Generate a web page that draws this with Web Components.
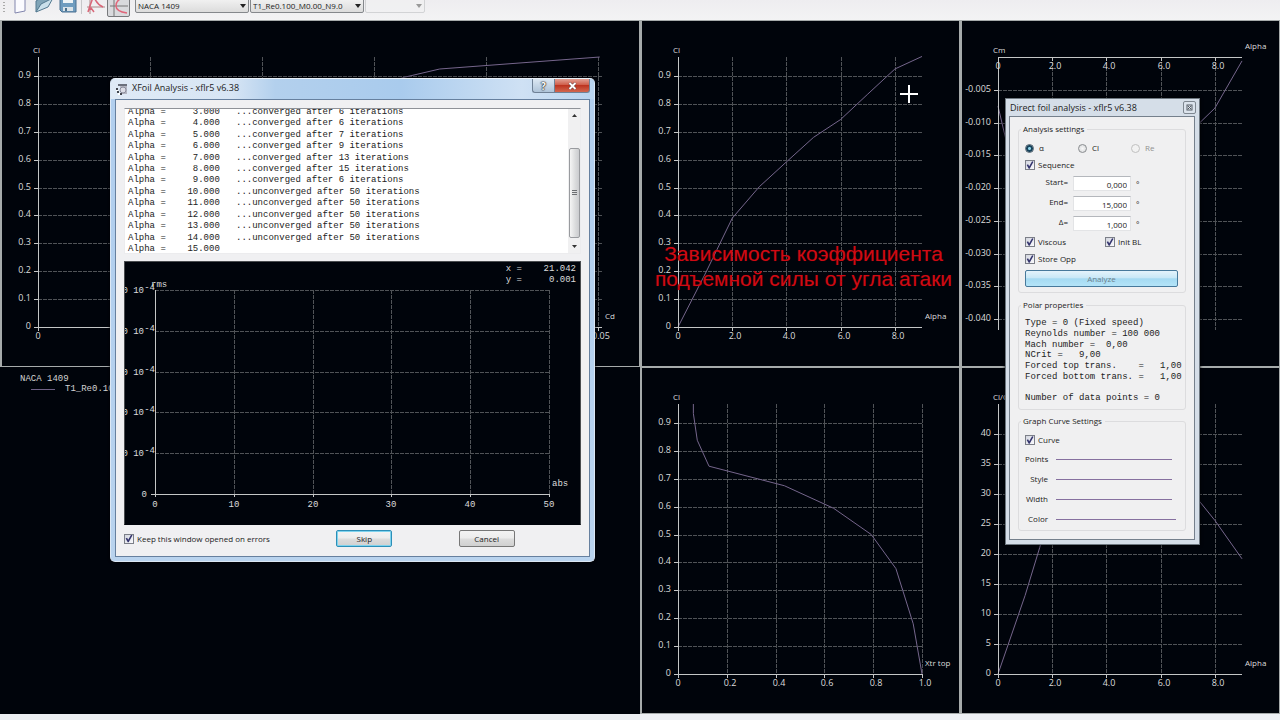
<!DOCTYPE html>
<html lang="en">
<head>
<meta charset="utf-8">
<title>xflr5 v6.38</title>
<style>
html, body { margin: 0; height: 100%; overflow: hidden; background: #00040b; }
body { font-family: "Open Sans", "Noto Sans", sans-serif; font-size: 8px; color: #222; }
</style>
</head>
<body>
<xflr-app></xflr-app>
<script>
const SVG_NS = 'http://www.w3.org/2000/svg';

function define(name, html, Base = HTMLElement, ready) {
  const template = document.createElement('template');
  template.innerHTML = html;
  customElements.define(name, class extends Base {
    constructor() {
      super();
      this.attachShadow({ mode: 'open' }).append(template.content.cloneNode(true));
      if (ready) ready.call(this, this.shadowRoot);
    }
  });
}

/* Base for elements that draw into an SVG and redraw when their box changes. */
class Plot extends HTMLElement {
  connectedCallback() {
    this.svg = this.shadowRoot.querySelector('svg');
    this.redraw();
    new ResizeObserver(() => this.redraw()).observe(this);
  }
  redraw() {
    this.svg.replaceChildren();
    this.draw(this.clientWidth, this.clientHeight);
  }
  add(tag, attrs, text) {
    const node = document.createElementNS(SVG_NS, tag);
    for (const key in attrs) node.setAttribute(key, attrs[key]);
    if (text !== undefined) node.textContent = text;
    this.svg.append(node);
    return node;
  }
  line(x1, y1, x2, y2, cls) { this.add('line', { x1, y1, x2, y2, class: cls }); }
  text(x, y, value, anchor, cls) { this.add('text', { x, y, 'text-anchor': anchor, class: cls }, value); }
}

const plotStyle = `
  svg { display: block; width: 100%; height: 100%; }
  line { shape-rendering: crispEdges; stroke-width: 1; }
  .grid { stroke: #505357; stroke-dasharray: 4 1; }
  .axis { stroke: #c4c6c6; }
  .curve { fill: none; stroke: #75668c; stroke-width: 1; }
  text { fill: #dcdcdc; white-space: pre; }`;

const charts = {
  drag: { y: 'Cl', x: 'Cd', xMax: .0504, xStep: .01, xDigits: 2, yMin: 0, yMax: .968, yStep: .1, yDigits: 1,
    points: [[.009, 0], [.01, .38], [.0165, .68], [.022, .77], [.0328, .896], [.0359, .925], [.0502, .968]] },
  lift: { y: 'Cl', x: 'Alpha', xMax: 9, xStep: 2, xDigits: 1, yMin: 0, yMax: .968, yStep: .1, yDigits: 1,
    points: [[0, 0], [1, .19], [2, .39], [3, .503], [4, .592], [5, .68], [6, .744], [7, .835], [8, .925], [9, .97]] },
  moment: { y: 'Cm', x: 'Alpha', xMax: 9, xStep: 2, xDigits: 1, yMin: -.0412, yMax: 0, yStep: .005, yDigits: 3,
    points: [[0, -.0075], [1, -.025], [2, -.037], [3, -.036], [5, -.027], [6, -.018], [7, -.0118], [8, -.0078], [9, -.0006]] },
  transition: { y: 'Cl', x: 'Xtr top', xMax: 1, xStep: .2, xDigits: 1, yMin: 0, yMax: .968, yStep: .1, yDigits: 1,
    points: [[.063, .968], [.063, .934], [.079, .838], [.127, .745], [.436, .675], [.638, .594], [.792, .5], [.893, .378], [.964, .18], [1, 0]] },
  glide: { y: 'Cl/Cd', x: 'Alpha', xMax: 9, xStep: 2, xDigits: 1, yMin: 0, yMax: 45, yStep: 5, yDigits: 0,
    points: [[0, 0], [1, 13.1], [1.54, 21.1], [2, 29], [3, 37], [4, 40], [5, 39], [6, 36], [7, 31.2], [8, 25.6], [9, 19.2]] }
};

class PolarChart extends Plot {
  constructor() {
    super();
    this.attachShadow({ mode: 'open' }).innerHTML = `
      <style>
        :host { display: block; position: relative; min-width: 0; min-height: 0; overflow: hidden; box-sizing: border-box;
          border: 1px solid #a6abab; border-left-width: 2px; background: #00040b; }
        ${plotStyle}
        svg { position: absolute; inset: 0; }
        .tick { font-size: 9px; }
        .title { font-size: 8px; }
      </style><svg></svg><slot></slot>`;
  }
  draw(w, h) {
    const c = charts[this.getAttribute('kind')];
    const left = 36, right = w - 37, top = 36, bottom = h - 39;
    const px = v => left + v / c.xMax * (right - left);
    const py = v => bottom - (v - c.yMin) / (c.yMax - c.yMin) * (bottom - top);
    const axisY = Math.round(py(0));
    const dir = c.yMin < 0 ? -1 : 1;
    const limit = dir < 0 ? -c.yMin : c.yMax;
    const foot = dir < 0 ? bottom + 3 : bottom;
    for (let i = 1; i * c.xStep <= c.xMax + 1e-6; i++) {
      const x = Math.round(px(i * c.xStep));
      this.line(x, top, x, foot, 'grid');
      this.line(x, axisY, x, axisY + 4, 'axis');
      this.text(x + 3, axisY + 12, (i * c.xStep).toFixed(c.xDigits), 'middle', 'tick');
    }
    for (let i = 1; i * c.yStep <= limit - c.yStep / 9; i++) {
      const y = Math.round(py(dir * i * c.yStep));
      this.line(left, y, right, y, 'grid');
      this.line(left - 4, y, left, y, 'axis');
      this.text(left - 7, y + 2, (dir * i * c.yStep).toFixed(c.yDigits), 'end', 'tick');
    }
    this.add('polyline', { class: 'curve', points: c.points.map(p => px(p[0]) + ',' + py(p[1])).join(' ') });
    this.line(left, top, left, dir < 0 ? foot : foot + 4, 'axis');
    this.line(dir < 0 ? left : left - 4, axisY, right, axisY, 'axis');
    this.text(left, axisY + 12, '0', 'middle', 'tick');
    if (dir > 0) this.text(left - 7, axisY + 2, '0', 'end', 'tick');
    this.text(left - 5, top - 4, c.y, 'start', 'title');
    this.text(right + 3, axisY - 8, c.x, 'start', 'title');
  }
}
customElements.define('polar-chart', PolarChart);

class ResidualPlot extends Plot {
  constructor() {
    super();
    this.attachShadow({ mode: 'open' }).innerHTML = `
      <style>
        :host { display: block; overflow: hidden; box-sizing: border-box; background: #00040b; border: 1px solid #4a4d50;
          border-bottom-color: #00040b; font: 9px "Liberation Mono", monospace; }
        ${plotStyle}
      </style><svg></svg>`;
  }
  draw(w, h) {
    const left = 30, right = w - 31, top = 28, bottom = h - 30;
    for (let i = 1; i <= 5; i++) {
      const x = Math.round(left + (right - left) * i / 5);
      const y = Math.round(bottom - (bottom - top) * i / 5);
      this.line(x, top, x, bottom, 'grid');
      this.line(x, bottom, x, bottom + 3, 'axis');
      this.text(x, bottom + 13, i * 10, 'middle');
      this.line(left, y, right, y, 'grid');
      this.text(left - 11, y + 3, '0 10', 'end');
      this.text(left, y, '-4', 'end');
    }
    this.line(left, top, left, bottom + 3, 'axis');
    this.line(left - 4, bottom, right, bottom, 'axis');
    this.text(left, bottom + 13, '0', 'middle');
    this.text(left - 8, bottom + 3, '0', 'end');
    this.text(left - 4, top - 3, 'rms', 'start');
    this.text(right + 3, bottom - 8, 'abs', 'start');
    this.text(w - 4, 9, 'x =    21.042', 'end');
    this.text(w - 4, 20, 'y =     0.001', 'end');
  }
}
customElements.define('residual-plot', ResidualPlot);

define('check-box', `
  <style>
    :host { display: block; line-height: 12px; }
    label { display: flex; width: fit-content; align-items: center; gap: 3px; height: 12px; white-space: nowrap; }
    input { appearance: none; box-sizing: border-box; width: 10px; height: 10px; margin: 0; border: 1px solid #7c7f88;
      background: linear-gradient(135deg, #d3d6df, #fafafd); display: grid; place-items: center; }
    input:checked::before { content: ""; width: 8px; height: 8px; background: #35356e;
      clip-path: polygon(8% 50%, 26% 42%, 40% 66%, 76% 4%, 94% 8%, 46% 96%, 34% 96%); }
  </style>
  <label><input type="checkbox" checked><slot></slot></label>`);

define('radio-option', `
  <style>
    :host { display: block; line-height: 12px; }
    :host([disabled]) { color: #909090; }
    label { display: flex; width: fit-content; align-items: center; gap: 5px; height: 12px; }
    input { appearance: none; box-sizing: border-box; width: 9px; height: 9px; margin: 0; border: 1px solid #8a8d90; border-radius: 50%;
      background: radial-gradient(#f8f8f8, #d4d6d8); }
    input:checked { border-color: #4d5f6c; background: radial-gradient(circle, #8fd4ea 0 1px, #16435c 2px 3px, #d5dde2 4px); }
    input:disabled { border-color: #c0c0c0; background: #f2f2f2; }
  </style>
  <label><input type="radio"><slot></slot></label>`, HTMLElement, function (root) {
    const input = root.querySelector('input');
    queueMicrotask(() => {
      input.checked = this.hasAttribute('checked');
      input.disabled = this.hasAttribute('disabled');
    });
  });

define('push-button', `
  <style>
    :host { display: block; }
    button { display: block; box-sizing: border-box; width: 100%; height: 17px; padding: 0; font: inherit; line-height: 14px; color: #222; border: 1px solid #777;
      border-radius: 2px; background: linear-gradient(#f3f3f3, #ececec 48%, #dddddd 52%, #d0d0d0); }
    :host([primary]) button { border-color: #2c8fb8; box-shadow: inset 0 0 0 1px #7fd3ee; }
    :host([busy]) button { color: #6d7f8b; border-color: #47799b; background: linear-gradient(#e4f3fb, #c9e8f7 45%, #a5daf2 52%, #b4e4f8); }
  </style>
  <button type="button"><slot></slot></button>`);

define('group-box', `
  <style>
    :host { display: block; }
    fieldset { margin: 0; min-width: 0; border: 1px solid #dcdcde; border-radius: 3px; padding: 7px 7px 5px 6px; }
    legend { padding: 0 3px 0 2px; margin-left: -4px; line-height: 12px; }
    div { display: flex; flex-direction: column; gap: var(--row-gap, 5px); }
  </style>
  <fieldset><legend><slot name="title"></slot></legend><div><slot></slot></div></fieldset>`);

define('number-row', `
  <style>
    :host { display: block; }
    label { display: grid; grid-template-columns: 43px 58px 1fr; column-gap: 5px; height: 15px; line-height: 11px; text-align: right; }
    input { box-sizing: border-box; width: 100%; height: 15px; margin: 0; padding: 1px 3px 0; border: 1px solid #e3e4e6; border-top-color: #b4b7bc;
      font: inherit; line-height: 12px; color: #222; text-align: right; background: #fff; }
    .unit { text-align: left; line-height: 15px; }
  </style>
  <label><slot></slot><input type="text"><span class="unit">°</span></label>`, HTMLElement, function (root) {
    queueMicrotask(() => { root.querySelector('input').value = this.getAttribute('value'); });
  });

define('line-picker', `
  <style>
    :host { display: block; }
    label { display: grid; grid-template-columns: 23px 1fr; column-gap: 8px; height: 12px; line-height: 12px; text-align: right; align-items: center; }
    button { height: 12px; padding: 0; margin: 0 6px 0 0; border: 0; background: none; display: flex; align-items: center; }
    button i { flex: 1; height: 1px; background: #86709f; }
    :host([wide]) button { margin-right: 2px; }
  </style>
  <label><slot></slot><button type="button"><i></i></button></label>`);

define('combo-box', `
  <style>
    :host { display: block; position: relative; height: 15px; }
    select { appearance: none; box-sizing: border-box; width: 100%; height: 15px; padding: 1px 10px 0 2px; border: 1px solid #85888c; border-radius: 2px;
      font: inherit; line-height: 12px; color: #222; background: linear-gradient(#f2f2f2, #dcdcdc); }
    :host([disabled]) select { border-color: #c5c7c9; background: #f1f1f2; }
    svg { position: absolute; right: 3px; top: 6px; width: 6px; height: 4px; fill: #222; pointer-events: none; }
    :host([disabled]) svg { fill: #999; }
  </style>
  <select aria-label="Selection"><option></option></select><svg viewBox="0 0 6 4"><path d="M0 0h6L3 4z"/></svg>`, HTMLElement, function (root) {
    queueMicrotask(() => {
      root.querySelector('option').textContent = this.getAttribute('value') || '';
      root.querySelector('select').disabled = this.hasAttribute('disabled');
    });
  });

define('tool-bar', `
  <style>
    :host { display: flex; align-items: flex-end; height: 20px; box-sizing: border-box; overflow: hidden; padding: 0 0 6px 3px;
      background: linear-gradient(#eeedf0, #f3f3f4); }
    button { flex: none; width: 22px; height: 22px; margin: 0 2px 0 0; padding: 0; border: 0; background: none; display: grid; place-items: center; }
    button.on { width: 23px; height: 26px; margin: 0 0 -3px -2px; border: 1px solid #77797c; border-radius: 2px; background: #d9dadd; }
    .grip { flex: none; width: 2px; height: 18px; margin-right: 4px; background: repeating-linear-gradient(#aaa 0 1px, transparent 1px 3px); }
    .sep { flex: none; width: 1px; height: 20px; margin-right: 3px; background: #c6c7c9; }
    svg { display: block; }
    .tools { display: flex; align-items: flex-end; flex: none; width: 126px; }
    combo-box { width: 114px; margin: 0 1px 1px 0; }
    combo-box.last { width: 60px; }
    combo-box.first { margin-left: 6px; }
  </style>
  <div class="tools">
    <span class="grip"></span>
    <button type="button" aria-label="New"><svg width="20" height="22"><path d="M5 1h7l3 4v14l-10 2z" fill="#fbfbff" stroke="#8286ad"/><path d="M12 1v4h3" fill="#dcdcf0" stroke="#8286ad"/></svg></button>
    <button type="button" aria-label="Open"><svg width="20" height="22"><path d="M2 20V9l5-3 3 1 6-4v4" fill="#80a4b7" stroke="#537990"/><path d="m2 20 5-8L19 6l-5 9z" fill="#c9e0eb" stroke="#537990"/></svg></button>
    <button type="button" aria-label="Save"><svg width="20" height="22"><path d="M2 4h16v16H4l-2-2z" fill="#6f9cbf" stroke="#4a7191"/><path d="M5 5h10v6H5z" fill="#eef3f6"/><path d="M5 15h10v4H5z" fill="#dae3e9"/><path d="M7 16h2v3H7z" fill="#4b6f8a"/></svg></button>
    <span class="sep"></span>
    <button type="button" aria-label="Foil design"><svg width="20" height="22"><path d="M4 0v22M1 15h18" stroke="#a88" fill="none"/><path d="M2 20C6 6 8 6 7 2c2 7 5 11 10 13M2 19l3-3 3 4" stroke="#d96678" stroke-width="1.5" fill="none"/></svg></button>
    <button type="button" class="on" aria-label="Polars"><svg width="20" height="24"><path d="M5 0v24M1 14h18" stroke="#777" fill="none"/><path d="M18 5C10 6 7 10 7 14s4 6 11 7" stroke="#e0667a" stroke-width="1.500" fill="none"/></svg></button>
  </div>
  <combo-box class="first" value="NACA 1409"></combo-box>
  <combo-box value="T1_Re0.100_M0.00_N9.0"></combo-box>
  <combo-box class="last" disabled></combo-box>`);

define('polar-legend', `
  <style>
    :host { display: block; padding: 7px 20px; font: 9px/10px "Liberation Mono", monospace; color: #d2d2d2; white-space: nowrap; overflow: hidden; }
    p { margin: 0; }
    .entry { display: flex; align-items: center; gap: 10px; padding-left: 11px; }
    .entry i { width: 24px; height: 1px; background: #6f6286; }
  </style>
  <p>NACA 1409</p>
  <p class="entry"><i></i>T1_Re0.100_M0.00_N9.0</p>`);

define('caption-text', `
  <style>
    :host { position: absolute; left: 6px; right: 0; top: 220px; text-align: center; font: 21px/25px "Liberation Sans", sans-serif; color: #cf0a14; white-space: nowrap;
      text-shadow: 0 0 1px #500; }
  </style>
  <slot></slot>`);

define('xfoil-log', `
  <style>
    :host { display: grid; grid-template-columns: 1fr 12px; box-sizing: border-box; height: 146px; overflow: hidden; background: #fff; border: 1px solid #ececee; border-top-color: #8f9298; }
    ol { display: grid; grid-auto-rows: 1fr; list-style: none; margin: -3px 0 -2px; padding: 0 0 0 3px; font: 9px "Liberation Mono", monospace; color: #222; white-space: pre; }
    li { display: flex; align-items: center; }
    .bar { display: flex; flex-direction: column; align-items: center; background: #f0f0f1; padding: 5px 0; box-sizing: border-box; }
    .thumb { box-sizing: border-box; width: 11px; height: 90px; margin: 31px 0 auto; border: 1px solid #999b9f; border-radius: 2px;
      background: linear-gradient(90deg, #f5f5f5, #dadbdc 60%, #cbcccf); display: grid; place-items: center; }
    .thumb i { width: 5px; height: 6px; background: repeating-linear-gradient(#6d6f73 0 1px, transparent 1px 2px); }
    svg { display: block; fill: #333; }
  </style>
  <ol></ol>
  <div class="bar">
    <svg width="5" height="3"><path d="M0 3h5L2.500 0z"/></svg>
    <span class="thumb"><i></i></span>
    <svg width="5" height="3"><path d="M0 0h5L2.500 3z"/></svg>
  </div>`, HTMLElement, function (root) {
    const results = ['converged after 6', 'converged after 6', 'converged after 7', 'converged after 9', 'converged after 13',
      'converged after 15', 'converged after 6', 'unconverged after 50', 'unconverged after 50', 'unconverged after 50',
      'unconverged after 50', 'unconverged after 50', ''];
    results.forEach((result, i) => {
      const li = document.createElement('li');
      li.textContent = 'Alpha =' + (i + 3).toFixed(3).padStart(10) + (result ? '   ...' + result + ' iterations' : '');
      root.querySelector('ol').append(li);
    });
  });

define('xfoil-window', `
  <style>
    :host { position: absolute; left: 110px; top: 78px; width: 485px; box-sizing: border-box; padding: 0 4px 4px; border: 1px solid #dbe7f4; border-top-color: #e8f0f8; border-radius: 5px;
      background: linear-gradient(#b2cfee 0 30%, #b9d3ee); box-shadow: 0 0 3px #000; }
    header { display: flex; align-items: center; height: 20px; margin: 0 -4px; padding-left: 5px; border-radius: 4px 4px 0 0;
      background: linear-gradient(90deg, #dfeaf6, #d7e5f4 25%, #b3d0ed 34%, #a9cbed 60%, #cfe1f4 85%, #b9d4ef); }
    h2 { margin: 0 auto 0 4px; padding-bottom: 2px; font: inherit; font-size: 9px; line-height: 14px; }
    header button { align-self: flex-start; height: 14px; padding: 0; border: 1px solid #6f8196; border-top: 0; display: grid; place-items: center; }
    .help { width: 22px; border-radius: 0 0 0 3px; border-right: 0; background: linear-gradient(#dce8f3, #afc4d9); font: bold 10px/12px "Open Sans", sans-serif; color: #fff; text-shadow: 0 0 1px #222, 0 0 1px #222, 0 0 2px #222; }
    .close { width: 36px; margin-right: 4px; border-radius: 0 0 3px; background: linear-gradient(#e2a195, #cf5d4a 45%, #bd3420 50%, #d2674f); }
    .content { display: flex; flex-direction: column; box-sizing: border-box; padding: 8px 8px 9px; border: 1px solid #66809f; background: #f0f0f2; }
    residual-plot { height: 264px; margin: 7px 0 5px; }
    footer { display: flex; align-items: center; }
    check-box, push-button { margin-right: auto; }
    push-button { width: 56px; }
  </style>
  <header>
    <svg width="12" height="12" viewBox="0 0 12 12"><path d="M2 1h9v2H2z" fill="#6b707c"/><path d="M4 3h7v8H6z" fill="#b4b6c2"/><circle cx="7" cy="7" r="3" fill="#dcdde6" stroke="#8a8d9c"/><path d="M0 5h2v2H0zM1 8h2v2H1zM4 10h2v2H4z" fill="#43464e"/><path d="M0 7h2v1H0zM2 10h2v2H2z" fill="#fff"/></svg>
    <h2>XFoil Analysis - xflr5 v6.38</h2>
    <button type="button" class="help" aria-label="Help">?</button>
    <button type="button" class="close" aria-label="Close"><svg width="9" height="8"><path d="m1.500 1 6 6m0-6-6 6" stroke="#5b3333" stroke-width="3"/><path d="m1.500 1 6 6m0-6-6 6" stroke="#fff" stroke-width="2"/></svg></button>
  </header>
  <div class="content">
    <xfoil-log></xfoil-log>
    <residual-plot></residual-plot>
    <footer>
      <check-box>Keep this window opened on errors</check-box>
      <push-button primary>Skip</push-button>
      <push-button>Cancel</push-button>
    </footer>
  </div>`);

define('analysis-panel', `
  <style>
    :host { position: absolute; right: 80px; top: 98px; width: 195px; box-sizing: border-box; padding: 0 4px 4px; border: 1px solid #6d7780; background: #d5dee8; box-shadow: 0 0 3px #000; }
    header { display: flex; align-items: center; justify-content: space-between; height: 17px; padding-left: 1px; margin: 0 -1px; }
    h2 { margin: 0; font: inherit; font-size: 9px; line-height: 14px; }
    header button { box-sizing: border-box; width: 13px; height: 13px; padding: 0; border: 1px solid #7e8790; border-radius: 2px; background: #dbe3ec; display: grid; place-items: center; }
    .content { display: flex; flex-direction: column; gap: 6px; margin-left: -1px; padding: 6px 8px 8px; border: 1px solid #75808c; background: #f0f0f1; }
    .radios { display: grid; grid-template-columns: 53px 53px 1fr; }
    .checks { display: grid; grid-template-columns: 80px 1fr; }
    output { display: grid; grid-auto-rows: 1fr; height: 86px; font: 9px "Liberation Mono", monospace; white-space: pre; }
    .curve { --row-gap: 8px; }
    .polar { margin-bottom: -1px; }
    .curve check-box { margin-bottom: -1px; }
  </style>
  <header>
    <h2>Direct foil analysis - xflr5 v6.38</h2>
    <button type="button" aria-label="Close"><svg width="7" height="7"><rect x="1" y="1" width="5" height="5" fill="none" stroke="#555c64"/><path d="m2 2 3 3m0-3-3 3" stroke="#555c64"/></svg></button>
  </header>
  <div class="content">
    <group-box>
      <span slot="title">Analysis settings</span>
      <div class="radios"><radio-option checked>α</radio-option><radio-option>Cl</radio-option><radio-option disabled>Re</radio-option></div>
      <check-box>Sequence</check-box>
      <number-row value="0,000">Start=</number-row>
      <number-row value="15,000">End=</number-row>
      <number-row value="1,000">Δ=</number-row>
      <div class="checks"><check-box>Viscous</check-box><check-box>Init BL</check-box></div>
      <check-box>Store Opp</check-box>
      <push-button busy>Analyze</push-button>
    </group-box>
    <group-box class="polar">
      <span slot="title">Polar properties</span>
      <output><span>Type = 0 (Fixed speed)</span><span>Reynolds number = 100 000</span><span>Mach number =  0,00</span><span>NCrit =   9,00</span><span>Forced top trans.    =   1,00</span><span>Forced bottom trans. =   1,00</span><span> </span><span>Number of data points = 0</span></output>
    </group-box>
    <group-box class="curve">
      <span slot="title">Graph Curve Settings</span>
      <check-box>Curve</check-box>
      <line-picker>Points</line-picker>
      <line-picker>Style</line-picker>
      <line-picker>Width</line-picker>
      <line-picker wide>Color</line-picker>
    </group-box>
  </div>`);

define('cross-cursor', `
  <style>
    :host { position: absolute; right: 41px; top: 64px; width: 18px; height: 18px;
      background: linear-gradient(#fff, #fff) center / 100% 2px no-repeat, linear-gradient(#fff, #fff) center / 2px 100% no-repeat; }
  </style>`);

define('xflr-app', `
  <style>
    :host { display: flex; flex-direction: column; height: 100vh; position: relative; overflow: hidden; }
    main { flex: 1; min-height: 0; display: grid; grid-template-columns: 2fr 1fr 1fr; grid-template-rows: 1fr 1fr; }
    footer { height: 6px; background: #edf0f4; }
  </style>
  <tool-bar></tool-bar>
  <main>
    <polar-chart kind="drag"></polar-chart>
    <polar-chart kind="lift"><caption-text>Зависимость коэффициента<br>подъемной силы от угла атаки</caption-text><cross-cursor></cross-cursor></polar-chart>
    <polar-chart kind="moment"></polar-chart>
    <polar-legend></polar-legend>
    <polar-chart kind="transition"></polar-chart>
    <polar-chart kind="glide"></polar-chart>
  </main>
  <footer></footer>
  <xfoil-window></xfoil-window>
  <analysis-panel></analysis-panel>`);
</script>
</body>
</html>
